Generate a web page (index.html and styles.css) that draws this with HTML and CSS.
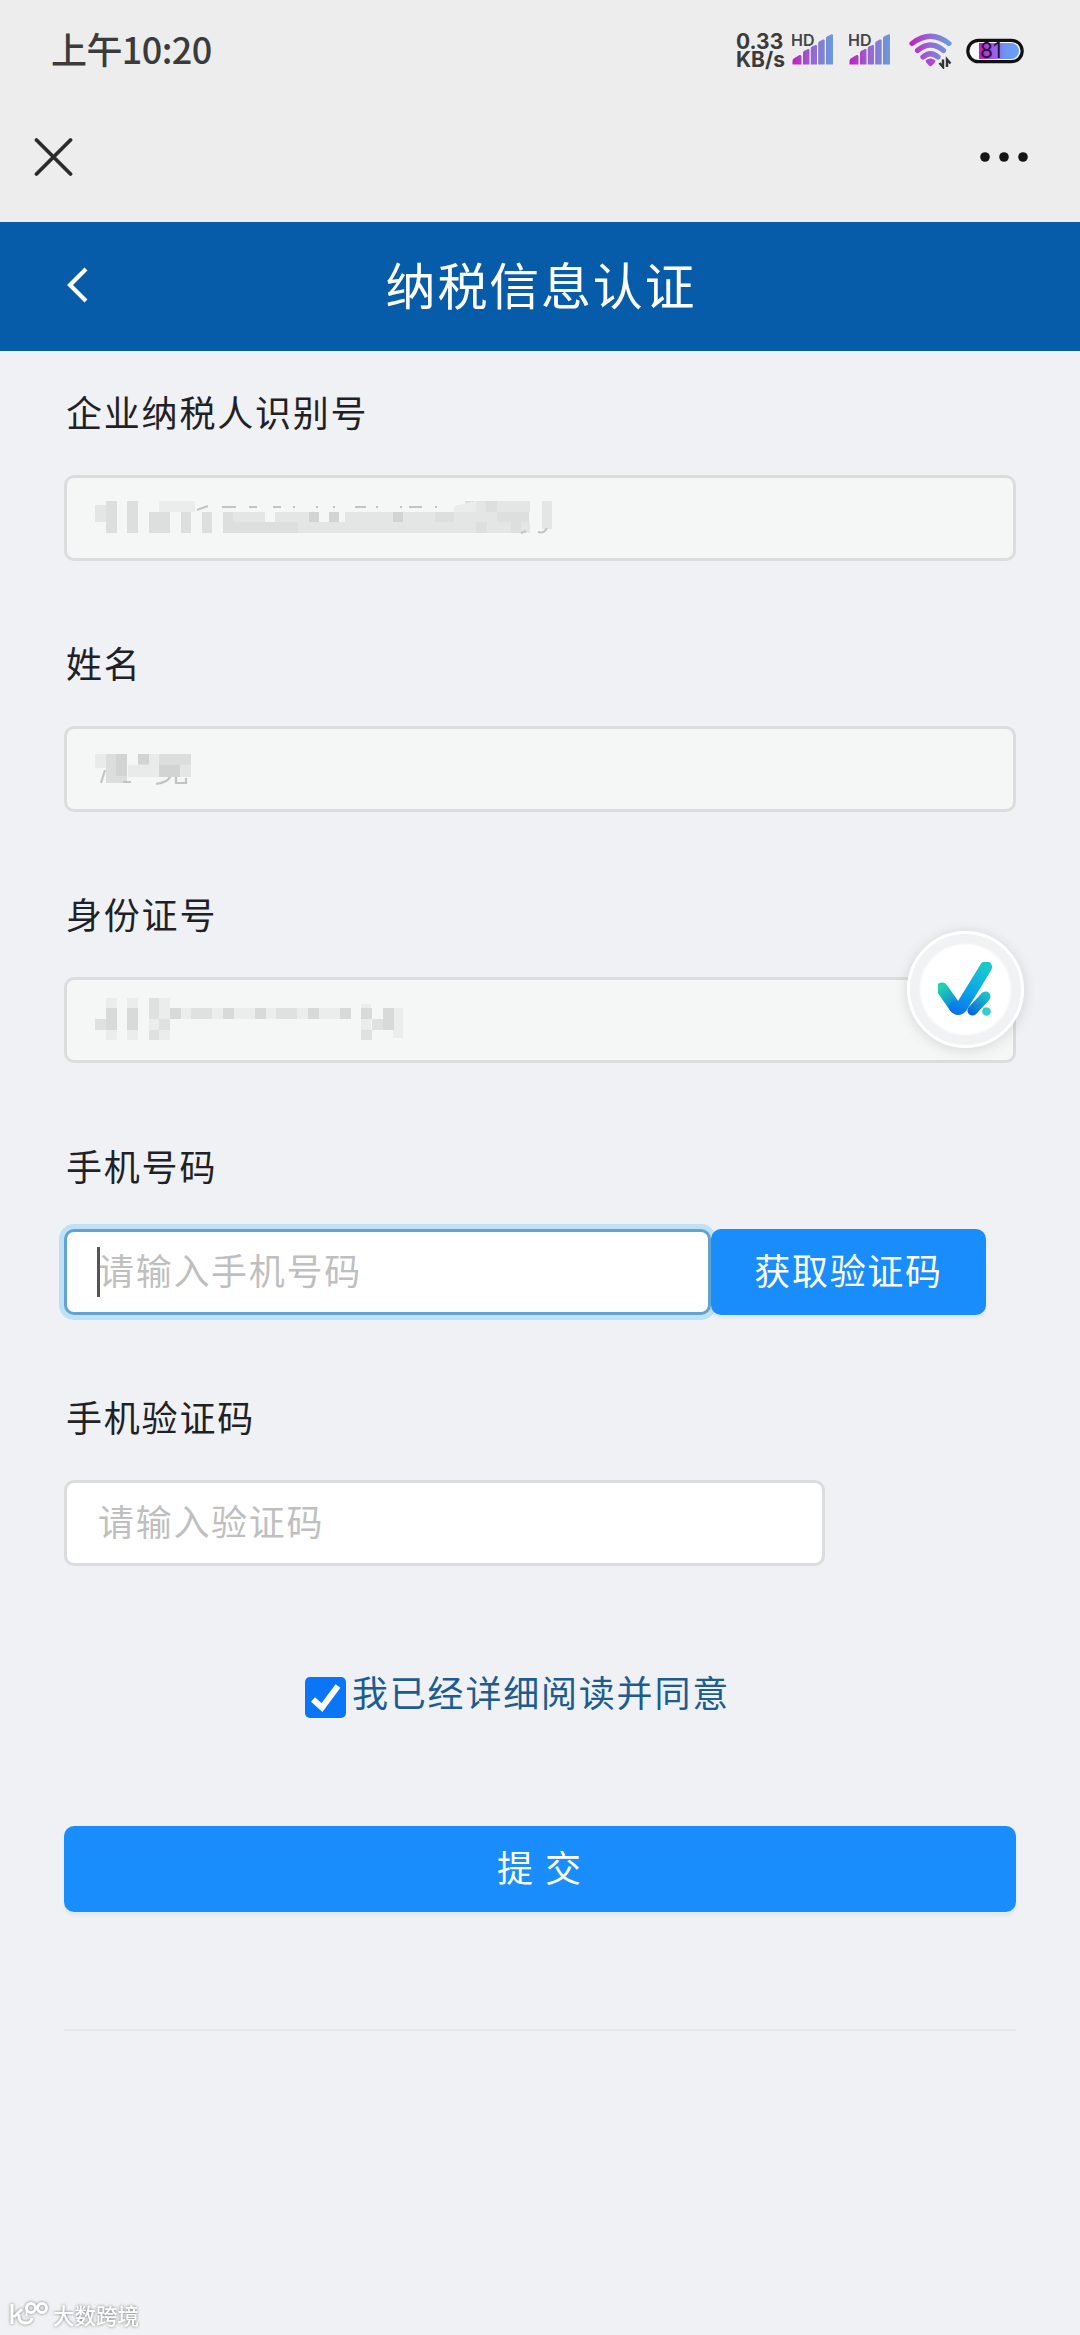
FILE: index.html
```html
<!DOCTYPE html>
<html lang="zh-CN">
<head>
<meta charset="utf-8">
<title>纳税信息认证</title>
<link rel="stylesheet" href="styles.css">
</head>
<body>
<svg class="defs" width="0" height="0" aria-hidden="true">
  <defs>
    <linearGradient id="neon" gradientUnits="userSpaceOnUse" x1="0" y1="0" x2="42" y2="0">
      <stop offset="0" stop-color="#c01fc4"/><stop offset=".5" stop-color="#9569d2"/><stop offset="1" stop-color="#659fdc"/>
    </linearGradient>
    <symbol id="signal" viewBox="0 0 42 34">
      <text x="-1" y="14" class="hd">HD</text>
      <path fill="url(#neon)" d="M.5 32.500v-3.500q0-2 2-3l5-3q2-.5 2 1.500v8zM11 32.500v-12q0-1 1-1.500l4-2q1.500-.5 1.500 1v14.500zM18.800 32.500V16q0-1 1-1.500l3.700-1.500q1.500-.5 1.500 1v18.500zM26.200 32.500V11q0-1 1-1.500l3.500-2q2-.5 2 1v24zM34 32.500V6q0-1 1-1.500l4.500-2.200q1.500-.5 1.500 1.200v29z"/>
    </symbol>
  </defs>
</svg>
<header class="system">
  <div class="status">
    <span class="time">上午10:20</span>
    <span class="speed"><span>0.33</span><span>KB/s</span></span>
    <svg class="signal" width="42" height="34"><use href="#signal"/></svg>
    <svg class="signal second" width="42" height="34"><use href="#signal"/></svg>
    <svg class="wifi" width="44" height="36" viewBox="0 0 44 36">
      <g fill="none" stroke="url(#neon)" stroke-width="5.200" stroke-linecap="round">
        <path d="M3 10.500Q21.500-4 40 10.500"/><path d="M8.500 17.500Q21.500 6.500 34.500 17.500"/><path d="M14 24Q21.500 17.500 29 24"/>
      </g>
      <path d="M16.500 27.500q5-4 10 0q-.5 3-4 5.500q-1 .7-2 0q-3.500-2.500-4-5.500z" fill="#ad48cc"/>
      <path d="M34 26.500v7.500l-3.500-4M38 34v-7.500l3.500 4" fill="none" stroke="#333" stroke-width="2.400"/>
    </svg>
    <svg class="battery" width="58" height="26" viewBox="0 0 58 26">
      <defs><linearGradient id="charge"><stop offset="0" stop-color="#c01bd0"/><stop offset=".3" stop-color="#a94fe0"/><stop offset=".65" stop-color="#6d94f4"/><stop offset="1" stop-color="#66a3f5"/></linearGradient></defs>
      <rect x="1.800" y="2.300" width="54.400" height="21.400" rx="10.700" fill="#fafafa" stroke="#111" stroke-width="3.200"/>
      <path d="M13 5h32a8 8 0 0 1 0 16H13z" fill="url(#charge)"/>
      <text x="14" y="20" class="level">81</text>
    </svg>
  </div>
  <div class="webview-bar">
    <svg width="40" height="40" viewBox="0 0 40 40"><path d="M3.500 3l34 34M37.500 3l-34 34" stroke="#2b2b2b" stroke-width="3.800" stroke-linecap="round"/></svg>
    <svg width="50" height="12" viewBox="0 0 50 12" fill="#151515"><circle cx="6" cy="6" r="4.800"/><circle cx="25" cy="6" r="4.800"/><circle cx="44" cy="6" r="4.800"/></svg>
  </div>
</header>
<nav class="title-bar">
  <svg class="back" width="24" height="40" viewBox="0 0 24 40"><path d="M20 4L4 20l16 16" fill="none" stroke="#fff" stroke-width="4.200"/></svg>
  <h1>纳税信息认证</h1>
</nav>
<main>
  <section class="field">
    <label>企业纳税人识别号</label>
    <div class="box locked">
      <svg width="490" height="50" viewBox="90 491 490 50" shape-rendering="crispEdges">
        <g fill="#dddfdf">
          <path d="M106 499h11v32h-11zM127 499h11v32h-11zM149 510h21v21h-21zM181 510h10v21h-10zM202 510h10v21h-10zM223 510h10v21h-10zM233 520h65v11h-65zM309 510h10v10h-10zM329 510h10v10h-10zM393 510h10v10h-10zM435 510h19v10h-19zM465 499h11v11h-11zM486 499h11v11h-11zM497 510h32v10h-32zM476 520h11v11h-11zM511 520h10v11h-10z"/>
        </g>
        <g fill="#e4e6e6">
          <path d="M95 503h11v17h-11zM233 510h32v10h-32zM275 510h34v10h-34zM298 520h52v11h-52zM345 510h29v10h-29zM372 510h21v21h-21zM350 520h22v11h-22zM403 510h32v10h-32zM393 520h32v11h-32zM425 520h21v11h-21zM446 520h30v11h-30zM454 510h43v10h-43zM476 499h10v21h-10zM497 499h33v11h-33zM487 520h24v11h-24zM521 520h9v11h-9zM542 499h10v28h-10z"/>
        </g>
        <path d="M159 499h36v11h-36zM454 504l22-5v11h-22z" fill="#ebeded"/>
        <path d="M309 510h10v10h-10zM393 510h10v10h-10zM329 510h10v10h-10z" fill="#d2d3d3"/>
        <path d="M197 508l11-4M222 505h14M249 505h8M273 505h8M293 505h2M316 505h2M333 505h2M355 505h11M376 505h2M400 505h2M409 505h13M435 505h2M521 531l5-2M538 530q6 2 9-4" fill="none" stroke="#c2c4c4" stroke-width="2" shape-rendering="auto"/>
      </svg>
    </div>
  </section>
  <section class="field">
    <label>姓名</label>
    <div class="box locked">
      <svg width="490" height="50" viewBox="90 744 490 50" shape-rendering="crispEdges">
        <path d="M95 754h11v14h-11zM149 754h11v11h-11zM128 765h31v12h-31z" fill="#e9ebea"/>
        <path d="M106 754h21v29h-21zM138 754h11v11h-11zM159 754h32v23h-32z" fill="#dcdddd"/>
        <path d="M116 754h11v22h-11zM138 754h11v10h-11zM159 765h21v12h-21z" fill="#d2d4d4"/>
        <path d="M180 765h11v12h-11z" fill="#e4e5e5"/>
        <path d="M101 783l4-13M123 782h8M156 784q12-2 14-7M176 777v6h10v-5" fill="none" stroke="#c2c4c4" stroke-width="2.200" shape-rendering="auto"/>
      </svg>
    </div>
  </section>
  <section class="field">
    <label>身份证号</label>
    <div class="box locked">
      <svg width="490" height="50" viewBox="90 996 490 50" shape-rendering="crispEdges">
        <path d="M106 999h11v42h-11zM127 999h11v42h-11zM149 999h21v42h-21zM180 1009h171v11h-171zM361 1005h10v36h-10zM393 1009h10v30h-10z" fill="#ebeded"/>
        <path d="M95 1020h11v11h-11zM149 999h10v21h-10zM159 1020h11v11h-11zM149 1031h10v10h-10zM191 1009h21v11h-21zM276 1009h21v11h-21zM372 1020h11v11h-11zM361 1031h11v10h-11z" fill="#dfe1e1"/>
        <path d="M106 1009h11v22h-11zM127 1009h11v22h-11zM170 1009h11v11h-11zM223 1009h11v11h-11zM255 1009h11v11h-11zM308 1009h11v11h-11zM340 1009h11v11h-11zM361 1009h11v11h-11zM383 1009h11v22h-11z" fill="#d8dada"/>
      </svg>
      <div class="float-button">
        <svg width="56" height="56" viewBox="0 0 56 56">
          <defs>
            <linearGradient id="tick" gradientUnits="userSpaceOnUse" x1="18" y1="52" x2="44" y2="4"><stop offset="0" stop-color="#0b72e8"/><stop offset=".5" stop-color="#0aa5ea"/><stop offset="1" stop-color="#18c8cf"/></linearGradient>
            <linearGradient id="tick-left" gradientUnits="userSpaceOnUse" x1="4" y1="25" x2="18" y2="46"><stop offset="0" stop-color="#1ed3aa"/><stop offset="1" stop-color="#0b7aea"/></linearGradient>
            <linearGradient id="tick-small" gradientUnits="userSpaceOnUse" x1="33" y1="52" x2="48" y2="32"><stop offset="0" stop-color="#0964e2"/><stop offset="1" stop-color="#19c3c8"/></linearGradient>
          </defs>
          <g fill="none" stroke-linecap="round" stroke-linejoin="round">
            <path d="M4 26.500L17 45" stroke="url(#tick-left)" stroke-width="12"/>
            <path d="M17 45q3 4 6.500 0L48 5" stroke="url(#tick)" stroke-width="12"/>
            <path d="M34.500 48.500L47.500 34.500" stroke="url(#tick-small)" stroke-width="10"/>
          </g>
          <circle cx="48.500" cy="49.500" r="4.300" fill="#35cdd0"/>
        </svg>
      </div>
    </div>
  </section>
  <section class="field">
    <label for="phone">手机号码</label>
    <div class="phone-row">
      <div class="caret-wrap"><input class="box phone focused" id="phone" placeholder="请输入手机号码"><i class="caret"></i></div>
      <button class="get-code">获取验证码</button>
    </div>
  </section>
  <section class="field">
    <label for="code">手机验证码</label>
    <input class="box code" id="code" placeholder="请输入验证码">
  </section>
  <div class="agreement">
    <svg class="check" width="41" height="41" viewBox="0 0 41 41"><rect width="41" height="41" rx="5" fill="#0b75f8"/><path d="M8 22.500l9 8L33 9" fill="none" stroke="#fff" stroke-width="6"/></svg>
    <span>我已经详细阅读并同意</span>
  </div>
  <button class="submit">提 交</button>
  <hr>
</main>
<footer class="watermark">
  <svg width="40" height="28" viewBox="0 0 40 28"><g fill="none" stroke="#fff" stroke-width="3"><path d="M3 4v20M13 9l-8 8M10 14q-1 9 7 9q5 0 6-5"/><circle cx="22" cy="8" r="4.500"/><circle cx="33" cy="8" r="4.500"/><path d="M17.500 6v10" stroke-width="2"/></g></svg>
  <span>大数跨境</span>
</footer>
</body>
</html>
```
FILE: styles.css
```css
* { box-sizing: border-box; }

body {
  margin: 0;
  width: 1080px;
  height: 2335px;
  overflow: hidden;
  display: flex;
  flex-direction: column;
  background: #eff1f5;
  color: #1f2126;
  font-family: "Noto Sans CJK SC", sans-serif;
  font-size: 36px;
}

svg { display: block; flex: none; }
.defs { position: absolute; }

.system { height: 222px; background: #ededed; }

.status {
  height: 102px;
  padding-left: 51px;
  display: flex;
  align-items: flex-start;
}
.time {
  width: 685px;
  padding-top: 22px;
  color: #3b3b3b;
  font-weight: 500;
  line-height: 52px;
  letter-spacing: -.6px;
}
.speed {
  width: 56px;
  padding-top: 33px;
  display: flex;
  flex-direction: column;
  color: #3b3b3b;
  font: 700 21px/18px Inter, sans-serif;
}
.signal { margin-top: 32px; overflow: visible; }
.second { margin-left: 15px; }
.hd { font: 600 16px Inter, sans-serif; fill: #444; }
.wifi { margin: 33px 0 0 18px; }
.battery { margin: 38px 0 0 13px; }
.level { font: 400 21px Inter, sans-serif; fill: #26103d; }

.webview-bar {
  height: 110px;
  padding: 0 51px 0 33px;
  display: flex;
  align-items: center;
  justify-content: space-between;
}

.title-bar {
  height: 129px;
  padding: 0 66px 4px;
  display: grid;
  grid-template-columns: 24px 1fr 24px;
  align-items: center;
  background: #075caa;
  color: #fff;
}
h1 {
  margin: -4px 0 0 2px;
  font-size: 50px;
  font-weight: 400;
  line-height: 72px;
  letter-spacing: 1.8px;
  text-align: center;
}

main { padding: 33px 64px 0; flex: 1; }

.field { height: 251.2px; }
label {
  display: block;
  height: 54px;
  margin-bottom: 37px;
  padding-left: 2px;
  line-height: 54px;
  letter-spacing: 1.8px;
}
.box {
  display: flex;
  align-items: center;
  width: 100%;
  height: 86px;
  padding: 0 31px 5px;
  border: 3px solid #dadcde;
  border-radius: 10px;
  outline: none;
  background: #fff;
  color: #1f2126;
  font: inherit;
  letter-spacing: 1.7px;
}
.box::placeholder { color: #bfbfbf; opacity: 1; }
.locked { position: relative; padding: 0 23px; background: #f5f6f6; }
.code { width: 761px; }

.phone-row { display: flex; }
.caret-wrap { position: relative; width: 647px; }
.focused { border-color: #62a4cf; box-shadow: 0 0 0 5px #bfe1f7; }
.caret {
  position: absolute;
  left: 33px;
  top: 18px;
  width: 3px;
  height: 50px;
  background: #555;
}

button {
  padding: 0 0 5px;
  border: 0;
  border-radius: 10px;
  background: #1a8dfc;
  color: #fff;
  font: inherit;
  letter-spacing: 1.7px;
  box-shadow: 0 4px 3px rgba(0, 60, 100, .05);
}
.get-code { position: relative; width: 275px; height: 86px; }

.float-button {
  position: absolute;
  left: 840px;
  top: -49px;
  width: 117px;
  height: 117px;
  display: grid;
  place-items: center;
  border: 3px solid #fff;
  border-radius: 50%;
  background: radial-gradient(circle, #fff 44px, #f1f2f3 47px);
  box-shadow: 0 2px 14px rgba(0, 0, 0, .13);
}

.agreement {
  height: 54px;
  margin-top: 25px;
  padding-left: 241px;
  display: flex;
  gap: 6px;
  line-height: 52px;
  letter-spacing: 1.8px;
  color: #1c5c91;
}
.check { margin-top: 12px; }

.submit { display: block; width: 100%; height: 86px; margin-top: 107px; letter-spacing: 2px; }

hr { height: 2px; margin: 117px 0 0; border: 0; background: #e5e7e9; }

.watermark {
  height: 39px;
  padding-left: 9px;
  display: flex;
  gap: 4px;
  color: #fff;
  font-size: 21.5px;
  font-weight: 500;
  line-height: 37px;
  filter: drop-shadow(0 0 1.500px #777);
}
.watermark svg { margin-top: 4px; }
```
